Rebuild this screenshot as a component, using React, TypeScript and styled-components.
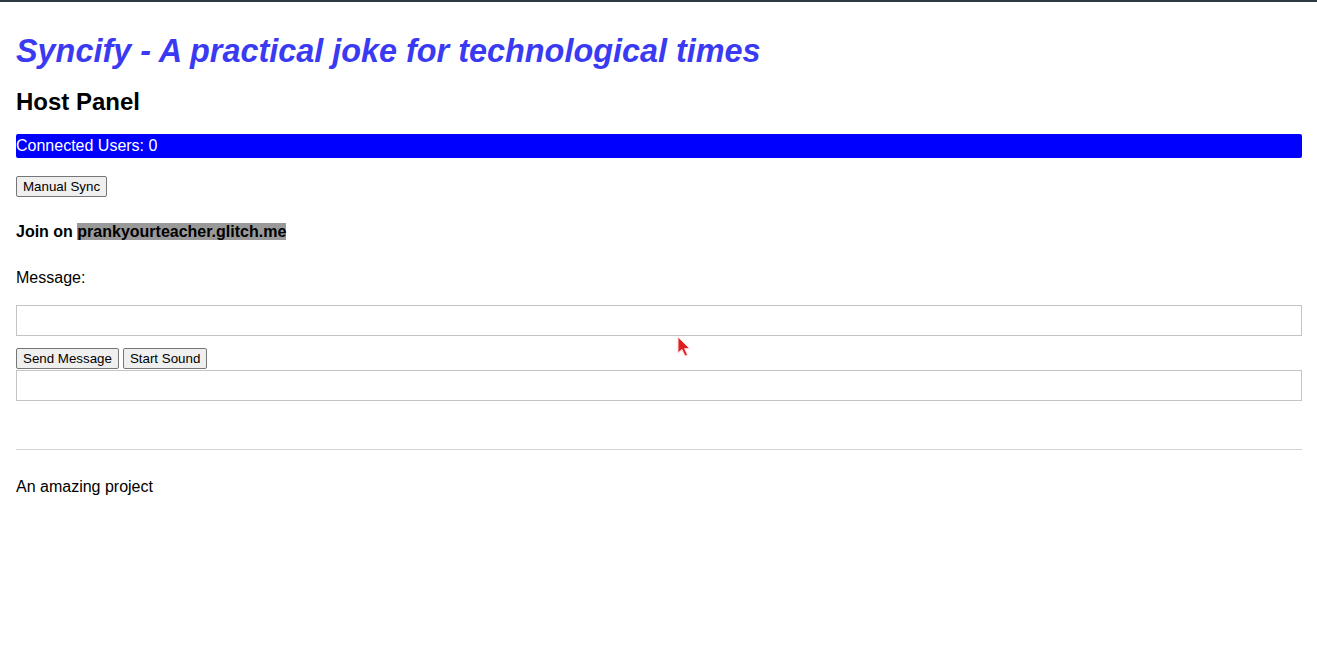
import React from 'react';
import styled, { createGlobalStyle } from 'styled-components';

const GlobalStyle = createGlobalStyle`
    html, body {
        margin: 0;
        padding: 0;
        background: #ffffff;
    }

    body {
        font-family: "Liberation Sans", Arial, sans-serif;
        font-size: 16px;
        color: #000000;
    }
`;

function App() {
    return (
        <>
            <GlobalStyle />
            <TopStrip />
            <Page>
                <Title>Syncify - A practical joke for technological times</Title>
                <SubTitle>Host Panel</SubTitle>
                <UsersBar>Connected Users: 0</UsersBar>
                <ButtonRow>
                    <Button>Manual Sync</Button>
                </ButtonRow>
                <JoinLine>
                    Join on <Domain>prankyourteacher.glitch.me</Domain>
                </JoinLine>
                <Label>Message:</Label>
                <TextBox type="text" />
                <ButtonRow $tight>
                    <Button>Send Message</Button>
                    <Button>Start Sound</Button>
                </ButtonRow>
                <OutputBox />
                <Rule />
                <Footer>An amazing project</Footer>
            </Page>
            <Pointer width="16" height="24" viewBox="0 0 16 24">
                <path
                    d="M1 1 L1 17 L5 13.5 L8 20 L10.5 19 L7.6 12.6 L12.5 12.5 Z"
                    fill="#e02020"
                    stroke="#ffd6d6"
                    strokeWidth="1"
                    strokeLinejoin="round"
                />
            </Pointer>
        </>
    );
}

const TopStrip = styled.div`
    height: 2px;
    background-color: #2f3b42;
`;

const Page = styled.main`
    display: flex;
    flex-direction: column;
    align-items: stretch;

    padding: 0 15px 0 16px;
`;

const Title = styled.h1`
    margin: 31px 0 0;

    font-size: 32.4px;
    line-height: 37px;
    font-style: italic;
    font-weight: bold;
    color: #3a3af2;
`;

const SubTitle = styled.h2`
    margin: 18px 0 0;

    font-size: 24px;
    line-height: 28px;
    font-weight: bold;
`;

const UsersBar = styled.div`
    margin-top: 18px;
    height: 24px;

    display: flex;
    align-items: center;

    border-radius: 2px;
    background-color: #0000ff;
    color: #ffffff;
    font-size: 16px;
`;

const ButtonRow = styled.div<{ $tight?: boolean }>`
    display: flex;
    gap: 4px;

    margin-top: ${(p) => (p.$tight ? '12px' : '18px')};
`;

const Button = styled.button`
    height: 21px;
    padding: 1px 6px;

    border: 1px solid #767676;
    border-radius: 2px;
    background-color: #efefef;

    font-family: "Liberation Sans", Arial, sans-serif;
    font-size: 13.33px;
    color: #000000;
`;

const JoinLine = styled.p`
    margin: 25px 0 0;

    font-weight: bold;
    line-height: 19px;
`;

const Domain = styled.span`
    background-color: #999999;
`;

const Label = styled.p`
    margin: 28px 0 0;
    line-height: 18px;
`;

const TextBox = styled.input`
    box-sizing: border-box;
    margin-top: 18px;
    height: 31px;
    width: 100%;

    border: 1px solid #c4c4c4;
    background: #ffffff;
`;

const OutputBox = styled.div`
    box-sizing: border-box;
    margin-top: 1px;
    height: 31px;

    border: 1px solid #c4c4c4;
`;

const Rule = styled.hr`
    margin: 48px 0 0;
    height: 0;

    border: none;
    border-top: 1px solid #d4d4d4;
`;

const Footer = styled.p`
    margin: 28px 0 0;
    line-height: 18px;
`;

const Pointer = styled.svg`
    position: absolute;
    left: 677px;
    top: 336px;
`;

export default App;
